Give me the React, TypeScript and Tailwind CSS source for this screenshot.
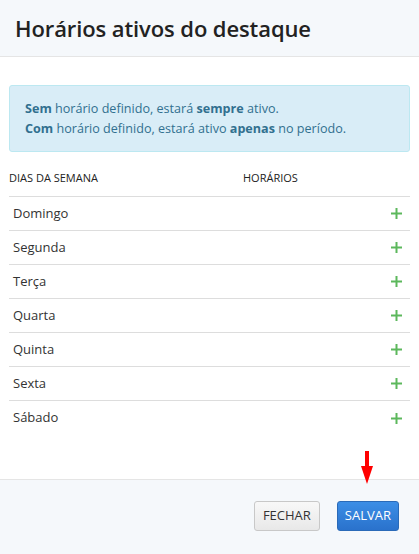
import React from 'react'

const days = ['Domingo', 'Segunda', 'Terça', 'Quarta', 'Quinta', 'Sexta', 'Sábado']

const PlusIcon = () => (
  <svg width="11" height="11" viewBox="0 0 11 11" className="shrink-0">
    <rect x="4.5" y="0" width="2" height="11" fill="#5cb85c" />
    <rect x="0" y="4.5" width="11" height="2" fill="#5cb85c" />
  </svg>
)

export default function App() {
  return (
    <div
      className="relative w-[419px] h-[554px] flex flex-col bg-white text-[#333]"
      style={{ fontFamily: '"Open Sans", "Noto Sans", Arial, sans-serif' }}
    >
      {/* header */}
      <div className="h-[57px] shrink-0 flex items-center px-[15px] bg-[#f5f8fb] border-b border-[#e5e5e5]">
        <h4 className="text-[22px] font-semibold text-[#222] tracking-[-0.1px]">Horários ativos do destaque</h4>
      </div>

      {/* body */}
      <div className="flex-1 px-[9px] pt-[28px]">
        <div className="rounded-[3px] border border-[#bce8f1] bg-[#d9edf7] text-[#31708f] text-[12.6px] leading-[20px] px-[15px] pt-[13px] pb-[12px]">
          <p><b>Sem</b> horário definido, estará <b>sempre</b> ativo.</p>
          <p><b>Com</b> horário definido, estará ativo <b>apenas</b> no período.</p>
        </div>

        <div className="mt-[9px]">
          <div className="h-[36px] flex items-center text-[11px] uppercase text-[#222] border-b border-[#ddd]">
            <span className="w-[234px]">Dias da semana</span>
            <span>Horários</span>
          </div>
          {days.map((d, i) => (
            <div
              key={d}
              className={
                'h-[34px] flex items-center justify-between pl-[4px] pr-[8px] text-[13px] ' +
                (i < days.length - 1 ? 'border-b border-[#ddd]' : '')
              }
            >
              <span>{d}</span>
              <PlusIcon />
            </div>
          ))}
        </div>
      </div>

      {/* footer */}
      <div className="h-[75px] shrink-0 flex items-center justify-end gap-[17px] pr-[20px] pb-[2px] bg-[#f5f8fb] border-t border-[#e5e5e5]">
        <button className="h-[30px] px-[8px] rounded-[3px] border border-[#c8c8c8] bg-gradient-to-b from-[#f8f8f8] to-[#e8e8e8] text-[13px] text-[#333]">
          FECHAR
        </button>
        <button className="h-[30px] px-[7px] rounded-[3px] border border-[#2a6ab8] bg-gradient-to-b from-[#3c8ee6] to-[#2a72cc] text-[13px] text-white">
          SALVAR
        </button>
      </div>

      {/* red arrow pointing at the save button */}
      <svg className="absolute left-[360px] top-[451px]" width="14" height="34" viewBox="0 0 14 34">
        <rect x="5" y="0" width="4" height="17" fill="#ff0000" />
        <polygon points="1,15 13,15 7,33" fill="#ff0000" />
      </svg>
    </div>
  )
}
